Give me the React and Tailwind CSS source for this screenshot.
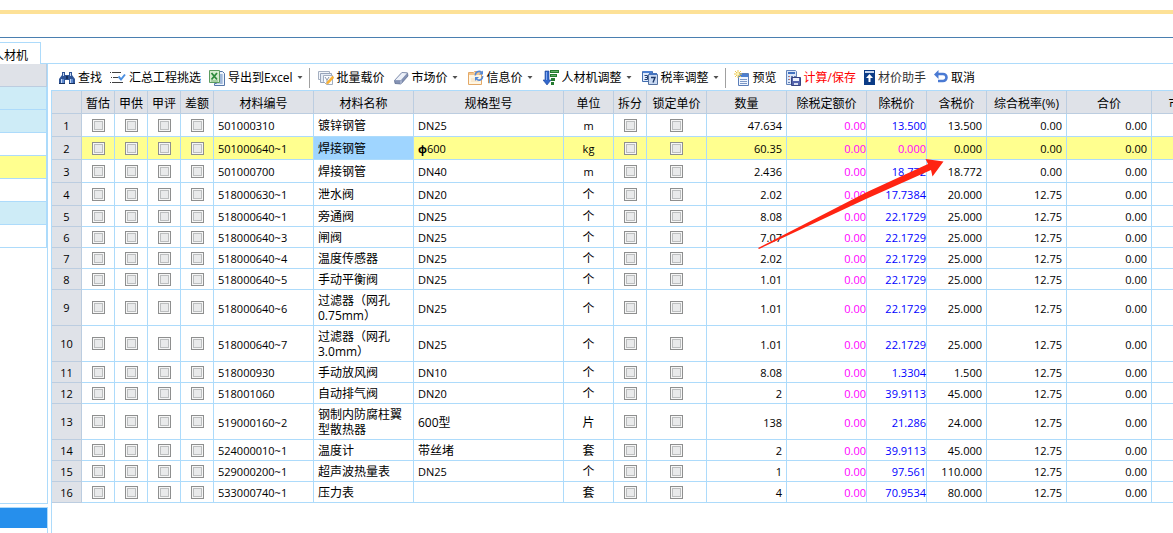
import { useState } from "react";

const columns = [
  { key: "no", label: "", width: "w-[30px]" },
  { key: "estimate", label: "暂估", width: "w-[33px]", type: "check" },
  { key: "supply", label: "甲供", width: "w-[33px]", type: "check" },
  { key: "review", label: "甲评", width: "w-[33px]", type: "check" },
  { key: "diff", label: "差额", width: "w-[33px]", type: "check" },
  { key: "code", label: "材料编号", width: "w-[100px]", style: "pl-1 text-[11px]" },
  { key: "name", label: "材料名称", width: "w-[100px]", style: "pl-1" },
  { key: "spec", label: "规格型号", width: "w-[150px]", style: "pl-1" },
  { key: "unit", label: "单位", width: "w-[50px]", style: "text-center" },
  { key: "split", label: "拆分", width: "w-[33px]", type: "check" },
  { key: "lock", label: "锁定单价", width: "w-[60px]", type: "check" },
  { key: "qty", label: "数量", width: "w-[80px]", style: "pr-1 text-right text-[11px]" },
  { key: "quota", label: "除税定额价", width: "w-[80px]", style: "text-right text-[11px] text-[#ff00ff]" },
  { key: "net", label: "除税价", width: "w-[60px]", style: "text-right text-[11px]" },
  { key: "gross", label: "含税价", width: "w-[60px]", style: "pr-1 text-right text-[11px]" },
  { key: "rate", label: "综合税率(%)", width: "w-[80px]", style: "pr-1 text-right text-[11px]" },
  { key: "total", label: "合价", width: "w-[85px]", style: "pr-1 text-right text-[11px]" },
  { key: "market", label: "市场价", width: "w-[70px]", style: "" },
];

const rows = [
  ["501000310", "镀锌钢管", "DN25", "m", "47.634", "13.500", "13.500", "0.00"],
  ["501000640~1", "焊接钢管", "ф600", "kg", "60.35", "0.000", "0.000", "0.00"],
  ["501000700", "焊接钢管", "DN40", "m", "2.436", "18.772", "18.772", "0.00"],
  ["518000630~1", "泄水阀", "DN20", "个", "2.02", "17.7384", "20.000", "12.75"],
  ["518000640~1", "旁通阀", "DN25", "个", "8.08", "22.1729", "25.000", "12.75"],
  ["518000640~3", "闸阀", "DN25", "个", "7.07", "22.1729", "25.000", "12.75"],
  ["518000640~4", "温度传感器", "DN25", "个", "2.02", "22.1729", "25.000", "12.75"],
  ["518000640~5", "手动平衡阀", "DN25", "个", "1.01", "22.1729", "25.000", "12.75"],
  ["518000640~6", "过滤器（网孔0.75mm）", "DN25", "个", "1.01", "22.1729", "25.000", "12.75"],
  ["518000640~7", "过滤器（网孔3.0mm）", "DN25", "个", "1.01", "22.1729", "25.000", "12.75"],
  ["518000930", "手动放风阀", "DN10", "个", "8.08", "1.3304", "1.500", "12.75"],
  ["518001060", "自动排气阀", "DN20", "个", "2", "39.9113", "45.000", "12.75"],
  ["519000160~2", "钢制内防腐柱翼型散热器", "600型", "片", "138", "21.286", "24.000", "12.75"],
  ["524000010~1", "温度计", "带丝堵", "套", "2", "39.9113", "45.000", "12.75"],
  ["529000200~1", "超声波热量表", "DN25", "个", "1", "97.561", "110.000", "12.75"],
  ["533000740~1", "压力表", "", "套", "4", "70.9534", "80.000", "12.75"],
].map(([code, name, spec, unit, qty, net, gross, rate], index) => ({
  no: index + 1,
  code,
  name,
  spec,
  unit,
  qty,
  quota: "0.00",
  net,
  gross,
  rate,
  total: "0.00",
  market: "",
}));

const sideRows = [
  "bg-[#ceecf7]",
  "bg-[#ceecf7]",
  "bg-white",
  "bg-[#ffff8f]",
  "bg-white",
  "bg-[#ceecf7]",
  "bg-white",
];

function Icon({ children }) {
  return (
    <svg viewBox="0 0 16 16" className="h-4 w-4 shrink-0" aria-hidden="true">
      {children}
    </svg>
  );
}

const icons = {
  find: (
    <Icon>
      <path d="M3 2h3v3h4V2h3v3l3 4v5h-6v-4H6v4H0V9l3-4z" fill="#2f5597" />
      <path d="M2 9h3v4H2zM11 9h3v4h-3z" fill="#5f8bd0" />
      <path d="M4 3h1v3H4zM11 3h1v3h-1zM2 9h1v4H2zM11 9h1v4h-1z" fill="#c5d8f5" />
      <path d="M7 6h2v3H7z" fill="#16305f" />
      <path d="M0 13h6v1H0zM10 13h6v1h-6z" fill="#16305f" />
    </Icon>
  ),
  collect: (
    <Icon>
      <path d="M2 2.500h9M3 7.500h5M2 12.500h11" stroke="#404040" strokeWidth="1" />
      <path d="M0 2h1v1H0zM1 7h1v1H1zM0 12h1v1H0z" fill="#404040" />
      <path d="M8.500 6.500l2.500 3 4-5" stroke="#4b8fe0" strokeWidth="2" fill="none" />
    </Icon>
  ),
  excel: (
    <Icon>
      <path d="M7.500 1.500h6l2 2v12h-10v-2h2z" fill="#eef4fc" stroke="#5576a8" />
      <path d="M10 5h4M10 7h4M10 9h4M10 11h4M8 13h6" stroke="#87a5cf" />
      <path d="M12 4v10" stroke="#87a5cf" />
      <path d="M.5.500h10v12H.500z" fill="#d7ecd0" stroke="#5d9c60" />
      <path d="M2.500 3l5.500 6.500M8 3L2.500 9.500" stroke="#2d8a3c" strokeWidth="1.800" />
      <path d="M2 11h7" stroke="#79b578" />
    </Icon>
  ),
  batch: (
    <Icon>
      <path d="M.5 1.500h11v8H.500z" fill="#f2f5fa" stroke="#a4afc0" />
      <path d="M2.500 3.500h11v9h-11z" fill="#e6ecf5" stroke="#98a5ba" />
      <path d="M5.500 5.500h9v9h-6l-3-3z" fill="#fafcff" stroke="#a2aec0" />
      <path d="M7 7l2 3 2-3M9 10v3" stroke="#8d99ad" fill="none" />
      <path d="M9 12l5.500-6 1.500 1.500-5.500 6-2 .5z" fill="#ffb52e" stroke="#e9a033" strokeWidth=".5" />
    </Icon>
  ),
  eraser: (
    <Icon>
      <path d="M9 2.500L14.500 3 15 6l-7 8-6-.500-.500-3z" fill="#8492b4" stroke="#56658a" strokeWidth=".7" />
      <path d="M9 2.500l5.500.5L8 10.500l-6.500 0z" fill="#edf1f9" stroke="#7685a8" strokeWidth=".6" />
      <path d="M8 10.500V14" stroke="#c7d0e6" />
    </Icon>
  ),
  info: (
    <Icon>
      <path d="M.5 2.500h5l1-1h7v13H.500z" fill="#fff6e3" stroke="#e3a867" />
      <path d="M1 3h5l1-1h6v3H1z" fill="#f6c68c" />
      <path d="M3 9h6M3 11h8" stroke="#f5dcb8" />
      <path d="M7.500 5.500a3.500 3.500 0 0 1 6-3M14.500 6a3.500 3.500 0 0 1-6 3" stroke="#5288d8" strokeWidth="1.600" fill="none" />
      <path d="M15 .5v4h-4zM7 11V7h4z" fill="#5288d8" />
    </Icon>
  ),
  adjust: (
    <Icon>
      <path d="M2 1h4v9h2l-4 5-4-5h2z" fill="#3267cb" stroke="#1c4698" strokeWidth=".6" />
      <path d="M3 2h1v8H3z" fill="#85aaf0" />
      <path d="M7 0h9v3H7zM7 4h7v3H7zM8 8h4v3H8zM8 12h3v3H8z" fill="#257a31" />
      <path d="M8 1h7v1H8zM8 5h5v1H8z" fill="#62b266" />
    </Icon>
  ),
  tax: (
    <Icon>
      <path d="M.5 1.500h10v10H.500z" fill="#dfeafb" stroke="#426daf" />
      <path d="M1 1h9v2H1z" fill="#4c7fd0" />
      <path d="M2.500 5.500h3v2h-2M3.500 7.500h2v2h-3" stroke="#253f70" fill="none" />
      <path d="M6.500 4.500h9v10h-9z" fill="#c9d9f2" stroke="#54719f" />
      <path d="M7 3h8v2H7z" fill="#4774bd" />
      <path d="M9 7.500h4l-2 5" stroke="#1d3868" strokeWidth="1.400" fill="none" />
    </Icon>
  ),
  preview: (
    <Icon>
      <path d="M4.500 3.500h10v12h-10z" fill="#eff5ff" stroke="#5a7db8" />
      <path d="M5 4h9v3H5z" fill="#4c7fd0" />
      <path d="M6 9.500h7M6 11.500h7M6 13.500h7" stroke="#7c98c6" />
      <path d="M4 0v8M0 4h8M1 1l6 6M7 1L1 7" stroke="#edc94f" strokeWidth="1" />
      <circle cx="4" cy="4" r="1.500" fill="#fff5b3" />
    </Icon>
  ),
  save: (
    <Icon>
      <path d="M1.500.500h9l1 1v13h-10z" fill="#dce7f8" stroke="#6384bb" />
      <path d="M3 2h7v2H3z" fill="#4373bf" />
      <path d="M3 6h2v1H3zM6 6h2v1H6zM9 6h2v1H9zM3 9h2v1H3zM6 9h2v1H6zM3 12h2v1H3z" fill="#6480b0" />
      <path d="M4 6h1v1H4zM4 9h1v1H4z" fill="#e27454" />
      <path d="M6.500 7.500h9v8h-9z" fill="#5463ac" stroke="#35427f" />
      <path d="M8 8h6v3H8z" fill="#edf1fc" />
      <path d="M9 13h4v2H9z" fill="#d8def1" />
    </Icon>
  ),
  helper: (
    <svg viewBox="0 0 11 16" className="h-4 w-[11px] shrink-0" aria-hidden="true">
      <path d="M0 0h11v15H0z" fill="#0b3b86" />
      <path d="M1 1h9v2H1z" fill="#c9d7ee" />
      <path d="M5.500 4L9 8H6.500v4h-2V8H2z" fill="#fff" />
    </svg>
  ),
  cancel: (
    <svg viewBox="0 0 14 16" className="h-4 w-[14px] shrink-0" aria-hidden="true">
      <path d="M3 4h6a3.500 3.500 0 0 1 0 7H4" stroke="#4a7ad3" strokeWidth="2.600" fill="none" />
      <path d="M0 4.500L4.500 0v9z" fill="#4a7ad3" />
    </svg>
  ),
};

const tools = [
  { icon: "find", label: "查找" },
  { icon: "collect", label: "汇总工程挑选" },
  { icon: "excel", label: "导出到Excel", menu: true },
  { divider: true },
  { icon: "batch", label: "批量载价" },
  { icon: "eraser", label: "市场价", menu: true },
  { icon: "info", label: "信息价", menu: true },
  { icon: "adjust", label: "人材机调整", menu: true },
  { icon: "tax", label: "税率调整", menu: true },
  { divider: true },
  { icon: "preview", label: "预览" },
  { icon: "save", label: "计算/保存", color: "text-[#ff0000]" },
  { icon: "helper", label: "材价助手", color: "text-[#333333]" },
  { icon: "cancel", label: "取消" },
];

function Toolbar() {
  return (
    <div className="flex h-[26px] items-center gap-2 pt-px pl-2">
      {tools.map((tool, index) =>
        tool.divider ? (
          <span key={index} className="-ml-1 h-5 w-px shrink-0 bg-[#a0a0a0]" />
        ) : (
          <button
            key={index}
            type="button"
            className={`flex shrink-0 items-center gap-[3px] whitespace-nowrap ${tool.color || ""}`}
          >
            {icons[tool.icon]}
            {tool.label}
            {tool.menu && (
              <svg viewBox="0 0 9 5" className="h-[5px] w-[9px]" aria-hidden="true">
                <path d="M1.500 1h5L4 4z" fill="#505050" />
              </svg>
            )}
          </button>
        )
      )}
    </div>
  );
}

function MaterialTable() {
  const [checked, setChecked] = useState({});

  const toggle = (id) => {
    setChecked({ ...checked, [id]: !checked[id] });
  };

  const cellColor = (row, col) => {
    if (col.key === "net") return row.net === "0.000" ? "text-[#ff00ff]" : "text-[#0000ff]";
    if (col.key === "name" && row.no === 2) return "bg-[#9fd5ff]";
    return "";
  };

  return (
    <table className="w-[1170px] table-fixed border-separate border-spacing-0 leading-[15px]">
      <thead>
        <tr className="h-[23px] bg-[#dfe2e8]">
          {columns.map((col) => (
            <th
              key={col.key}
              scope="col"
              className={`border-r border-b border-[#bccde0] px-0 pt-[2px] pb-0 font-normal whitespace-nowrap ${col.width}`}
            >
              {col.label}
            </th>
          ))}
        </tr>
      </thead>
      <tbody>
        {rows.map((row) => (
          <tr
            key={row.no}
            className={`${row.no <= 4 ? "h-[23px]" : "h-[21px]"} ${row.no === 2 ? "bg-[#ffff8f]" : "bg-white"}`}
          >
            {columns.map((col) => {
              if (col.key === "no") {
                return (
                  <th
                    key={col.key}
                    scope="row"
                    className="border-r border-b border-[#bccde0] bg-[#dfe2e8] p-0 text-[11px] font-normal"
                  >
                    {row.no}
                  </th>
                );
              }
              if (col.type === "check") {
                const id = `${col.key}-${row.no}`;
                return (
                  <td key={col.key} className="border-r border-b border-[#addbfb] p-0">
                    <input
                      type="checkbox"
                      aria-label={`${col.label} ${row.no}`}
                      checked={!!checked[id]}
                      onChange={() => toggle(id)}
                      className="mx-auto block h-[13px] w-[13px] appearance-none border border-[#8e8f8f] bg-[#e9eaeb] shadow-[inset_0_0_0_1px_#f6f6f6,inset_0_0_0_2px_#bcbebf] checked:bg-[#4a7ad3]"
                    />
                  </td>
                );
              }
              const text = row[col.key];
              const latin = /^[\x00-\xffф]+$/.test(text) ? "text-[11px]" : "";
              return (
                <td
                  key={col.key}
                  className={`border-r border-b border-[#addbfb] pt-[3px] pb-[2px] ${col.style} ${latin} ${cellColor(row, col)}`}
                >
                  {text.startsWith("ф") ? (
                    <>
                      <b>ф</b>
                      {text.slice(1)}
                    </>
                  ) : (
                    text
                  )}
                </td>
              );
            })}
          </tr>
        ))}
      </tbody>
    </table>
  );
}

export default function App() {
  return (
    <div className="flex h-screen flex-col overflow-hidden bg-white font-['Open_Sans','Noto_Sans_CJK_SC',sans-serif] text-[12px] leading-[15px] text-black">
      <header className="border-b border-[#4a7fb0] pt-[10px] pb-[23px]">
        <div className="h-1 bg-[#fde197]" />
      </header>

      <nav className="flex pt-1">
        <button
          type="button"
          className="-ml-5 h-[22px] w-[61px] shrink-0 border-t border-r border-[#addbfb] pt-[3px] whitespace-nowrap"
        >
          人材机
        </button>
        <div className="flex-1 border-b border-[#addbfb]" />
      </nav>

      <div className="flex min-h-0 flex-1">
        <aside className="flex w-12 shrink-0 flex-col gap-[3px]">
          <div className="flex-1 border-r border-b border-[#addbfb]">
            <div className="h-[23px] border-r border-b border-[#bccde0] bg-[#dfe2e8]" />
            {sideRows.map((color, index) => (
              <div key={index} className={`h-[23px] border-r border-b border-[#addbfb] ${color}`} />
            ))}
          </div>
          <div className="h-[26px] border-t border-r border-[#addbfb]">
            <div className="h-5 bg-[#268fec]" />
          </div>
        </aside>

        <main className="ml-[3px] flex min-w-0 flex-1 flex-col">
          <Toolbar />
          <div className="relative flex-1 overflow-hidden border-t border-l border-[#addbfb]">
            <MaterialTable />
            {/* arrow pointing at the tax-inclusive price of the selected row */}
            <svg
              viewBox="0 0 188 92"
              className="pointer-events-none absolute top-[67px] left-[705px] h-[92px] w-[188px]"
              aria-hidden="true"
            >
              <path
                d="M1 90L110 34L171 6L168.500 1L186.500 3.500L175.500 18.500L174 12L110 40.500L2 91Z"
                fill="#ff2412"
              />
            </svg>
          </div>
        </main>
      </div>
    </div>
  );
}
